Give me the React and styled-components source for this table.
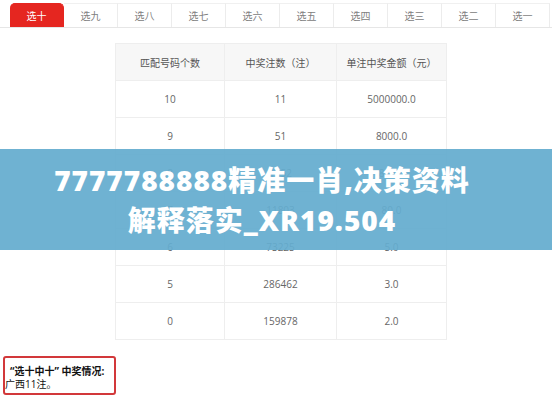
import React from "react";
import styled, { createGlobalStyle } from "styled-components";

const Global = createGlobalStyle`
  html, body { margin: 0; padding: 0; background: #fff; }
  body { width: 552px; height: 400px; overflow: hidden; font-family: "Open Sans", "Noto Sans CJK SC", sans-serif; }
`;

const Page = styled.div`
  position: relative;
  width: 552px;
  height: 400px;
  display: flex;
  flex-direction: column;
`;

const Tabs = styled.div`
  display: flex;
  padding: 3px 0 0 10px;
  border-bottom: 1px solid #e6e6e6;
`;

const Tab = styled.div`
  width: 54px;
  height: 24px;
  box-sizing: border-box;
  display: flex;
  align-items: center;
  justify-content: center;
  font-family: "Noto Sans CJK SC", sans-serif;
  font-size: 10px;
  color: ${(p) => (p.$active ? "#fff" : "#808080")};
  background: ${(p) => (p.$active ? "#e52620" : "#fff")};
  border-radius: ${(p) => (p.$active ? "5px 5px 0 0" : "0")};
  border-top: 1px solid ${(p) => (p.$active ? "#e52620" : "#f0f0f0")};
  border-right: 1px solid ${(p) => (p.$active ? "#e52620" : "#ececec")};
`;

const Table = styled.div`
  margin: 15px 0 0 115px;
  width: 331px;
  border-top: 1px solid #eeeeee;
  border-left: 1px solid #eeeeee;
`;

const Row = styled.div`
  display: grid;
  grid-template-columns: 109px 112px 110px;
  height: 37px;
  background: ${(p) => (p.$head ? "#f7f7f7" : "#fff")};
`;

const Cell = styled.div`
  display: flex;
  align-items: center;
  justify-content: center;
  border-right: 1px solid #eeeeee;
  border-bottom: 1px solid #eeeeee;
  font-family: ${(p) => (p.$head ? '"Noto Sans CJK SC", sans-serif' : '"Open Sans", "Noto Sans CJK SC", sans-serif')};
  font-size: 10px;
  color: ${(p) => (p.$head ? "#555" : "#666")};
`;

const Banner = styled.div`
  position: absolute;
  left: 0;
  top: 149px;
  width: 552px;
  height: 101px;
  box-sizing: border-box;
  padding-right: 28px;
  background: rgba(100, 172, 207, 0.93);
  display: flex;
  flex-direction: column;
  align-items: center;
  justify-content: center;
  color: #fff;
  font-family: "Open Sans", "Noto Sans CJK SC", sans-serif;
  font-weight: 800;
  font-size: 28px;
  letter-spacing: 1px;
  line-height: 40px;
  text-align: center;
`;

const Note = styled.div`
  margin: 16px 0 0 3px;
  width: 113px;
  height: 39px;
  box-sizing: border-box;
  border: 2px solid #d2383a;
  border-radius: 3px;
  padding: 7px 0 0 0;
  font-family: "Open Sans", "Noto Sans CJK SC", sans-serif;
  font-size: 10px;
  line-height: 13px;
  color: #111;
`;

const NoteTitle = styled.div`
  font-weight: 700;
  padding-left: 5px;
`;

const tabs = ["选十", "选九", "选八", "选七", "选六", "选五", "选四", "选三", "选二", "选一"];
const rows = [
  ["10", "11", "5000000.0"],
  ["9", "51", "8000.0"],
  ["8", "1052", "800.0"],
  ["7", "11803", "80.0"],
  ["6", "73225", "5.0"],
  ["5", "286462", "3.0"],
  ["0", "159878", "2.0"],
];

export default function App() {
  return (
    <Page>
      <Global />
      <Tabs>
        {tabs.map((t, i) => (
          <Tab key={t} $active={i === 0}>{t}</Tab>
        ))}
      </Tabs>
      <Table>
        <Row $head>
          <Cell $head>匹配号码个数</Cell>
          <Cell $head>中奖注数（注）</Cell>
          <Cell $head>单注中奖金额（元）</Cell>
        </Row>
        {rows.map((r) => (
          <Row key={r[0]}>
            {r.map((c, j) => (
              <Cell key={j}>{c}</Cell>
            ))}
          </Row>
        ))}
      </Table>
      <Note>
        <NoteTitle>“选十中十” 中奖情况:</NoteTitle>
        <div>广西11注。</div>
      </Note>
      <Banner>
        <div>7777788888精准一肖,决策资料</div>
        <div>解释落实_XR19.504</div>
      </Banner>
    </Page>
  );
}
